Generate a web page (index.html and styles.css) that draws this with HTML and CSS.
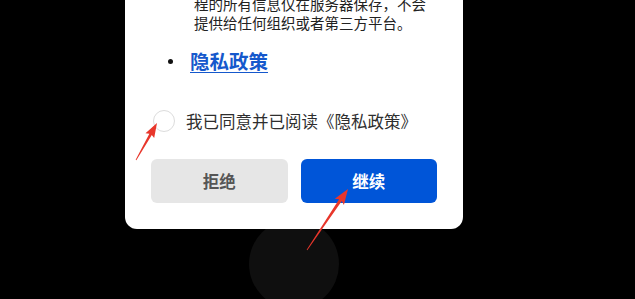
FILE: index.html
```html
<!DOCTYPE html>
<html lang="zh-CN">
<head>
    <meta charset="UTF-8" />
    <meta name="viewport" content="width=device-width, initial-scale=1.0" />
    <title>隐私政策</title>
    <link rel="stylesheet" href="styles.css">
</head>
<body>

    <div class="screen">
        <div class="dialog">
            <p class="dialog-text">程的所有信息仅在服务器保存，不会<br>提供给任何组织或者第三方平台。</p>

            <ul class="doc-list">
                <li><a href="#">隐私政策</a></li>
            </ul>

            <label class="agree">
                <span class="radio"></span>
                <span>我已同意并已阅读《隐私政策》</span>
            </label>

            <div class="actions">
                <button class="btn btn-reject">拒绝</button>
                <button class="btn btn-continue">继续</button>
            </div>
        </div>

        <div class="home-key"></div>

        <!-- annotation arrows -->
        <svg class="marks" width="635" height="299" viewBox="0 0 635 299">
            <g transform="translate(136,160) rotate(-60.4)">
                <polygon points="0,-0.4 29.5,-1.4 28,-5 42.5,0 28,5 29.5,1.4 0,0.4" fill="#e8362b" />
            </g>
            <g transform="translate(307,250) rotate(-56.1)">
                <polygon points="0,-0.4 60,-1.6 58,-5.5 73.5,0 58,5.5 60,1.6 0,0.4" fill="#e8362b" />
            </g>
        </svg>
    </div>

</body>
</html>
```

FILE: styles.css
```css
html, body {
    margin: 0;
    background: #000;
    height: 299px;
    overflow: hidden;
}

body {
    font-family: "Noto Sans CJK SC", "Noto Sans", sans-serif;
}

.screen {
    position: relative;
    width: 635px;
    height: 299px;
    overflow: hidden;
}

.dialog {
    position: relative;
    z-index: 1;
    width: 338px;
    box-sizing: border-box;
    margin: -20px 0 0 125px;
    padding: 14px 26px 26px 26px;
    background: #fff;
    border-radius: 12px;
}

.dialog-text {
    margin: 0 0 0 43px;
    font-size: 14.5px;
    line-height: 19px;
    color: #222;
    white-space: nowrap;
}

.doc-list {
    margin: 15px 0 0 0;
    padding: 0 0 0 39px;
    list-style: none;
}

    .doc-list li {
        position: relative;
        line-height: 28px;
    }

        .doc-list li::before {
            content: "";
            position: absolute;
            left: -22px;
            top: 12px;
            width: 5px;
            height: 5px;
            border-radius: 50%;
            background: #111;
        }

    .doc-list a {
        font-size: 19.5px;
        font-weight: bold;
        color: #1558cc;
        text-decoration: underline;
        text-underline-offset: 3px;
    }

.agree {
    display: flex;
    align-items: center;
    gap: 11px;
    margin: 34px 0 0 2px;
    font-size: 16.5px;
    color: #2e2e2e;
    line-height: 22px;
}

.radio {
    width: 22px;
    height: 22px;
    box-sizing: border-box;
    border: 1.5px solid #dcdcdc;
    border-radius: 50%;
    background: #fff;
}

.actions {
    display: flex;
    gap: 13px;
    margin-top: 27px;
}

.btn {
    flex: 1;
    height: 44px;
    border: none;
    border-radius: 6px;
    font-family: inherit;
    font-size: 16.5px;
    font-weight: bold;
    cursor: pointer;
}

.btn-reject {
    background: #e6e6e6;
    color: #555;
}

.btn-continue {
    background: #0055d8;
    color: #fff;
}

.home-key {
    width: 90px;
    height: 90px;
    margin: -10px 0 0 249px;
    border-radius: 50%;
    background: #0f0f0f;
}

.marks {
    position: absolute;
    left: 0;
    top: 0;
    z-index: 2;
    pointer-events: none;
}
```
